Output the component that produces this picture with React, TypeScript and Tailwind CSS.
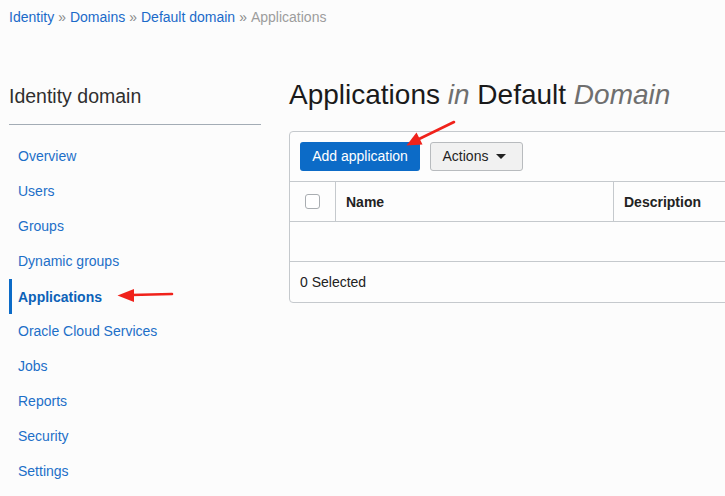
import React from "react";

const font = { fontFamily: '"Liberation Sans", Arial, Helvetica, sans-serif' };

const navItems = [
  "Overview",
  "Users",
  "Groups",
  "Dynamic groups",
  "Applications",
  "Oracle Cloud Services",
  "Jobs",
  "Reports",
  "Security",
  "Settings",
];

export default function App() {
  return (
    <div
      className="relative w-[725px] h-[496px] overflow-hidden bg-[#fcfcfc] text-[#161513]"
      style={font}
    >
      {/* Breadcrumb */}
      <div className="pl-[9px] pt-[7px] h-[29px] text-[14px] leading-[20px] flex items-start gap-[4px]">
        <span className="text-[#1b6ac9]">Identity</span>
        <span className="text-[#8a8a8a]">»</span>
        <span className="text-[#1b6ac9]">Domains</span>
        <span className="text-[#8a8a8a]">»</span>
        <span className="text-[#1b6ac9]">Default domain</span>
        <span className="text-[#8a8a8a]">»</span>
        <span className="text-[#9d9d9d]">Applications</span>
      </div>

      <div className="flex pl-[9px] gap-[28px]">
        {/* Sidebar */}
        <div className="w-[252px] shrink-0 pt-[53px]">
          <div className="text-[19.5px] leading-[28px] text-[#2f2f2f] pb-[14px] border-b border-[#a3acb5]">
            Identity domain
          </div>
          <div className="pt-[14px] flex flex-col">
            {navItems.map((item) => {
              const active = item === "Applications";
              return (
                <div
                  key={item}
                  className={
                    active
                      ? "h-[35px] flex items-center pl-[6px] pt-[2px] border-l-[3px] border-[#0c6bc7] text-[14px] font-bold text-[#0c62b8]"
                      : "h-[35px] flex items-center pl-[9px] text-[14px] text-[#1d6fc8]"
                  }
                >
                  {item}
                </div>
              );
            })}
          </div>
        </div>

        {/* Main content */}
        <div className="w-[470px] shrink-0 pt-[48px]">
          <h1 className="text-[28px] leading-[36px] text-[#1a1a1a] font-normal">
            Applications <i className="text-[#6f6f6f]">in</i> Default{" "}
            <i className="text-[#6f6f6f]">Domain</i>
          </h1>
          <div className="mt-[18px] w-[470px] border border-[#c5c9cd] rounded-[4px] bg-[#fdfdfd]">
            <div className="flex gap-[10px] px-[10px] pt-[10px] pb-[10px]">
              <div className="w-[120px] h-[29px] rounded-[3px] bg-[#0c6bc7] text-white text-[14px] flex items-center justify-center">
                Add application
              </div>
              <div className="w-[93px] h-[29px] rounded-[3px] bg-[#f1f1f1] border border-[#b8bbbe] text-[14px] text-[#1f1f1f] flex items-center justify-center gap-[8px] pr-[4px]">
                Actions
                <svg width="10" height="6" viewBox="0 0 10 6">
                  <path d="M0 0 L10 0 L5 5 Z" fill="#222" />
                </svg>
              </div>
            </div>
            <div className="flex h-[41px] border-t border-b border-[#c5c9cd] text-[14px] font-bold text-[#222]">
              <div className="w-[46px] border-r border-[#c5c9cd] flex items-center justify-center">
                <div className="w-[15px] h-[15px] rounded-[3px] border border-[#a9adb1] bg-white" />
              </div>
              <div className="w-[278px] border-r border-[#c5c9cd] flex items-center pl-[10px] pt-[2px]">
                Name
              </div>
              <div className="flex-1 flex items-center pl-[10px] pt-[2px]">Description</div>
            </div>
            <div className="h-[40px] border-b border-[#c5c9cd]" />
            <div className="h-[40px] flex items-center pl-[10px] text-[14px] text-[#222]">
              0 Selected
            </div>
          </div>
        </div>
      </div>

      {/* Annotation arrows */}
      <svg
        className="absolute left-0 top-0 pointer-events-none"
        width="725"
        height="496"
        viewBox="0 0 725 496"
      >
        <line x1="454" y1="122" x2="418" y2="139.5" stroke="#f0221b" strokeWidth="2.6" strokeLinecap="round" />
        <polygon points="406.5,145.5 422.5,144.5 416.5,132.5" fill="#f0221b" />
        <line x1="172" y1="294" x2="131" y2="295" stroke="#f0221b" strokeWidth="2.6" strokeLinecap="round" />
        <polygon points="117.5,295.5 134,289 134,302" fill="#f0221b" />
      </svg>
    </div>
  );
}
